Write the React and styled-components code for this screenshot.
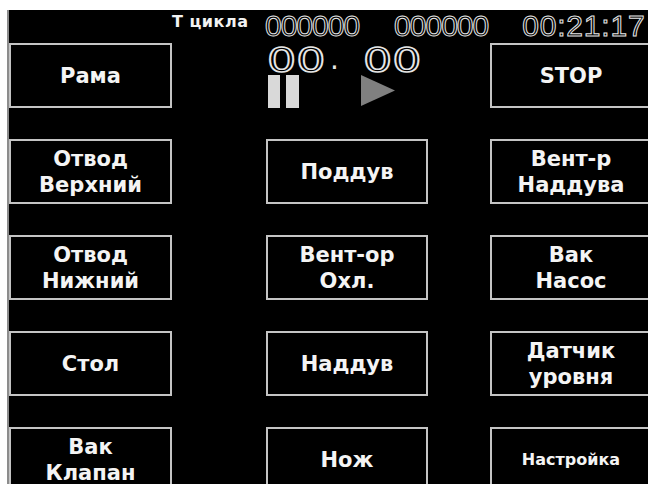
import styled, { createGlobalStyle } from "styled-components";

const GlobalStyle = createGlobalStyle`
  html, body {
    margin: 0;
    background: #ffffff;
  }
  body {
    font-family: "DejaVu Sans", "Liberation Sans", sans-serif;
  }
`;

const rows = [
  { left: "Рама", mid: null, right: "STOP" },
  { left: "Отвод\nВерхний", mid: "Поддув", right: "Вент-р\nНаддува" },
  { left: "Отвод\nНижний", mid: "Вент-ор\nОхл.", right: "Вак\nНасос" },
  { left: "Стол", mid: "Наддув", right: "Датчик\nуровня" },
  { left: "Вак\nКлапан", mid: "Нож", right: "Настройка", small: true },
];

export default function App() {
  return (
    <>
      <GlobalStyle />
      <Screen>
        <Header>
          <CycleLabel>Т цикла</CycleLabel>
          <Counter>000000</Counter>
          <Counter $gap={35}>000000</Counter>
          <Counter $gap={34} $spacing={0.8}>00:21:17</Counter>
        </Header>
        <Panel>
          {rows.map((row, i) => (
            <Row key={i}>
              <Button $col={1}>{row.left}</Button>
              {row.mid ? (
                <Button $col={3}>{row.mid}</Button>
              ) : (
                <Display>
                  <Timer>
                    <Digits>00</Digits>
                    <Dot>.</Dot>
                    <Digits>00</Digits>
                  </Timer>
                  <Controls>
                    <svg width="32" height="33" viewBox="0 0 32 33">
                      <rect x="1" y="0" width="12" height="33" fill="#d9d9d9" />
                      <rect x="19" y="0" width="13" height="33" fill="#d9d9d9" />
                    </svg>
                    <svg width="34" height="31" viewBox="0 0 34 31">
                      <polygon points="0,0 34,15.5 0,31" fill="#808080" />
                    </svg>
                  </Controls>
                </Display>
              )}
              <Button $col={5} $small={row.small}>
                {row.right}
              </Button>
            </Row>
          ))}
        </Panel>
      </Screen>
    </>
  );
}

const Screen = styled.div`
  margin: 10px 0 0 7px;
  height: 474px;
  background: #000000;
  border-left: 2px solid #8c8c8c;
  overflow-x: clip;
`;

const Header = styled.div`
  height: 32px;
  padding-top: 1px;
  display: flex;
  align-items: flex-start;
  padding-left: 163px;
  white-space: nowrap;
`;

const CycleLabel = styled.span`
  margin-top: 1px;
  width: 80px;
  font-size: 16px;
  line-height: 20px;
  letter-spacing: 0.5px;
  font-weight: bold;
  color: #f2f2f2;
`;

const Counter = styled.span`
  margin-left: ${p => p.$gap ?? 13}px;
  font-family: "Liberation Sans", sans-serif;
  font-size: 30px;
  line-height: 30px;
  letter-spacing: ${p => p.$spacing ?? -1}px;
  color: #000000;
  -webkit-text-stroke: 1px #e6e6e6;
`;

const Panel = styled.div`
  display: grid;
  grid-template-columns: 163px 94px 162px 62px 162px;
  row-gap: 31px;
`;

const Row = styled.div`
  display: contents;
`;

const Button = styled.div`
  grid-column: ${p => p.$col};
  height: 65px;
  box-sizing: border-box;
  border: 2px solid #c4c4c4;
  display: flex;
  align-items: center;
  justify-content: center;
  text-align: center;
  white-space: pre-line;
  color: #f4f4f4;
  font-weight: bold;
  font-size: ${p => (p.$small ? "16px" : "21px")};
  line-height: 26px;
`;

const Display = styled.div`
  grid-column: 3;
  height: 65px;
  display: flex;
  flex-direction: column;
`;

const Timer = styled.div`
  height: 32px;
  display: flex;
  align-items: flex-start;
  padding-top: 4px;
  box-sizing: border-box;
  padding-left: 1px;
`;

const Digits = styled.span`
  display: inline-block;
  width: 58px;
  font-size: 34px;
  line-height: 26px;
  color: #000000;
  -webkit-text-stroke: 1.5px #e6e6e6;
  transform: scaleX(1.35);
  transform-origin: left top;
`;

const Dot = styled.span`
  width: 38px;
  font-size: 28px;
  line-height: 26px;
  color: #e6e6e6;
  padding-left: 5px;
  box-sizing: border-box;
`;

const Controls = styled.div`
  display: flex;
  align-items: flex-start;
  gap: 62px;
  padding-left: 1px;
`;
